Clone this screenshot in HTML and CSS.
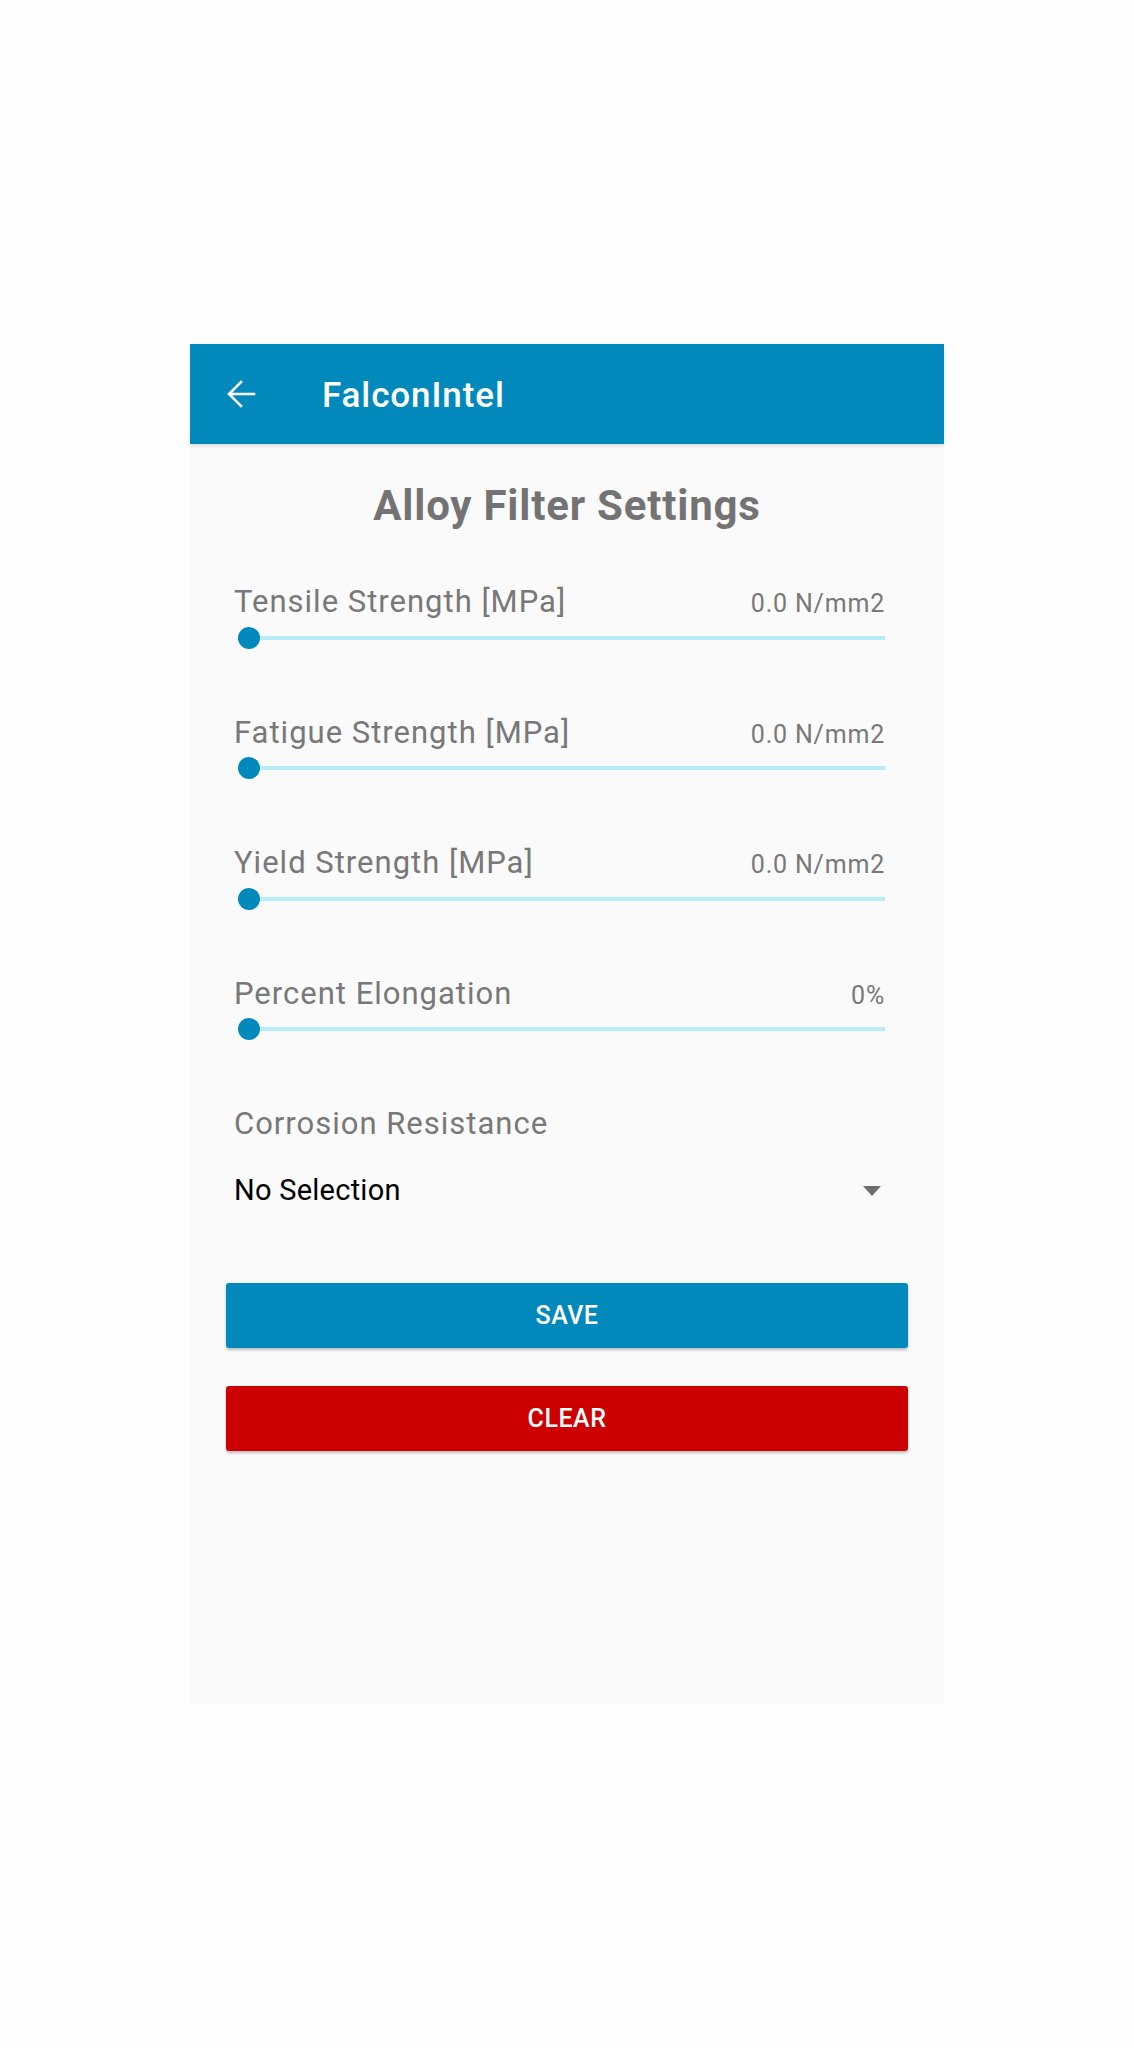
FILE: index.html
```html
<!DOCTYPE html>
<html>
<head>
<meta charset="utf-8">
<link rel="stylesheet" href="styles.css">
</head>
<body>
<div class="screen">
  <header class="appbar">
    <svg class="back" width="30" height="30" viewBox="0 0 30 30">
      <path d="M28 15H4M15 3L3 15l12 12" fill="none" stroke="#fff" stroke-width="2.6" stroke-linecap="square"/>
    </svg>
    <span class="app-title">FalconIntel</span>
  </header>
  <main class="content">
    <h1 class="page-title">Alloy Filter Settings</h1>
    <div class="setting">
      <div class="setting-head"><span class="label">Tensile Strength [MPa]</span><span class="value">0.0 N/mm2</span></div>
      <div class="slider"><span class="track"></span><span class="thumb"></span></div>
    </div>
    <div class="setting">
      <div class="setting-head"><span class="label">Fatigue Strength [MPa]</span><span class="value">0.0 N/mm2</span></div>
      <div class="slider"><span class="track"></span><span class="thumb"></span></div>
    </div>
    <div class="setting">
      <div class="setting-head"><span class="label">Yield Strength [MPa]</span><span class="value">0.0 N/mm2</span></div>
      <div class="slider"><span class="track"></span><span class="thumb"></span></div>
    </div>
    <div class="setting">
      <div class="setting-head"><span class="label">Percent Elongation</span><span class="value">0%</span></div>
      <div class="slider"><span class="track"></span><span class="thumb"></span></div>
    </div>
    <div class="setting select-setting">
      <div class="setting-head"><span class="label">Corrosion Resistance</span></div>
      <div class="select"><span class="select-text">No Selection</span><span class="caret"></span></div>
    </div>
    <button class="btn btn-save">SAVE</button>
    <button class="btn btn-clear">CLEAR</button>
  </main>
</div>
</body>
</html>
```
FILE: styles.css
```css
html, body {
  margin: 0;
  padding: 0;
  background: #fefefe;
}
body {
  font-family: Roboto, "Noto Sans", sans-serif;
}
.screen {
  width: 754px;
  margin: 344px auto 0;
  display: flex;
  flex-direction: column;
}
.appbar {
  height: 100px;
  background: #0089ba;
  display: flex;
  align-items: center;
  position: relative;
  z-index: 1;
  box-shadow: 0 2px 4px rgba(0,0,0,0.12);
}
.back {
  margin-left: 36px;
  flex: none;
}
.app-title {
  margin-left: 66px;
  margin-top: 2px;
  color: #fff;
  font-size: 35px;
  font-weight: 500;
  line-height: 41px;
  letter-spacing: 0.9px;
}
.content {
  background: #fafafa;
  height: 1261px;
  display: flex;
  flex-direction: column;
}
.page-title {
  margin: 37px 0 0;
  text-align: center;
  font-size: 42px;
  line-height: 49px;
  font-weight: 700;
  letter-spacing: 0.8px;
  color: #737373;
}
.setting {
  margin: 54px 59px 0 44px;
}
.setting + .setting {
  margin-top: 66px;
}
.setting-head {
  display: flex;
  justify-content: space-between;
  align-items: baseline;
  height: 35px;
}
.label {
  font-size: 31px;
  line-height: 35px;
  letter-spacing: 1px;
  color: #787878;
}
.value {
  font-size: 25px;
  line-height: 35px;
  letter-spacing: 0.8px;
  color: #787878;
}
.slider {
  position: relative;
  height: 22px;
  margin-top: 7.5px;
}
.track {
  position: absolute;
  left: 14px;
  right: 0;
  top: 9px;
  height: 4px;
  background: #b6ecf8;
}
.thumb {
  position: absolute;
  left: 3.5px;
  top: 0;
  width: 22px;
  height: 22px;
  border-radius: 50%;
  background: #0089ba;
}
.select-setting {
  margin-top: 66px;
}
.select {
  display: flex;
  justify-content: space-between;
  align-items: center;
  margin-top: 32px;
  height: 35px;
}
.select-text {
  font-size: 29px;
  line-height: 35px;
  letter-spacing: 0.25px;
  color: #000;
}
.caret {
  width: 0;
  height: 0;
  border-left: 9px solid transparent;
  border-right: 9px solid transparent;
  border-top: 10px solid #6e6e6e;
  margin-right: 4px;
}
.btn {
  display: block;
  margin: 0 36px;
  height: 65px;
  border: none;
  border-radius: 3px;
  color: #fff;
  font-family: Roboto, "Noto Sans", sans-serif;
  font-size: 25px;
  font-weight: 500;
  letter-spacing: 0.5px;
  box-shadow: 0 2px 3px rgba(0,0,0,0.25);
}
.btn-save {
  margin-top: 75px;
  background: #0089ba;
}
.btn-clear {
  margin-top: 38px;
  background: #cc0000;
}
```
